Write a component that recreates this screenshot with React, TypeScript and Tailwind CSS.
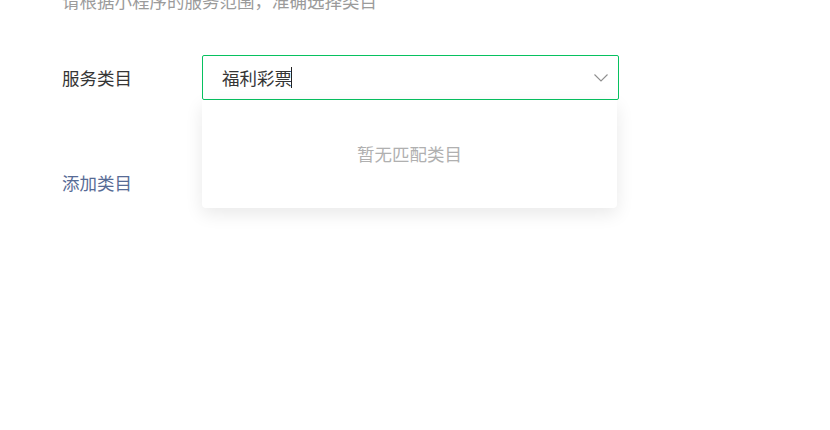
export default function App() {
  return (
    <div
      className="relative h-[430px] w-[830px] overflow-hidden bg-white text-[17.5px] leading-[24px]"
      style={{ fontFamily: '"Noto Sans CJK SC", "Noto Sans", sans-serif' }}
    >
      <div className="pl-[62px]">
        {/* hint text, cut off at the top */}
        <p className="-mt-[11px] text-[#9b9b9b]">请根据小程序的服务范围，准确选择类目</p>

        {/* category row */}
        <div className="mt-[42px] flex items-center">
          <span className="w-[140px] text-[#353535]">服务类目</span>
          <div className="relative">
            <div className="flex h-[45px] w-[417px] items-center rounded-[2px] border border-[#07c160] bg-white pl-[19px] pr-[8px]">
              <span className="text-[#353535]">福利彩票</span>
              <span className="-ml-[1px] h-[21px] w-[1px] bg-[#222]" />
              <svg
                className="ml-auto mr-[1px]"
                width="16"
                height="10"
                viewBox="0 0 16 10"
                fill="none"
              >
                <polyline
                  points="1.5,1.5 8,8 14.5,1.5"
                  stroke="#8f8f8f"
                  strokeWidth="1.1"
                />
              </svg>
            </div>

            {/* dropdown */}
            <div className="absolute left-0 top-[45px] z-10 flex h-[108px] w-[415px] items-center justify-center rounded-b-[4px] bg-white shadow-[0_6px_18px_rgba(0,0,0,0.09)]">
              <span className="text-[#b0b0b0]">暂无匹配类目</span>
            </div>
          </div>
        </div>

        <a className="mt-[71px] block text-[#576b95]">添加类目</a>
      </div>
    </div>
  );
}
